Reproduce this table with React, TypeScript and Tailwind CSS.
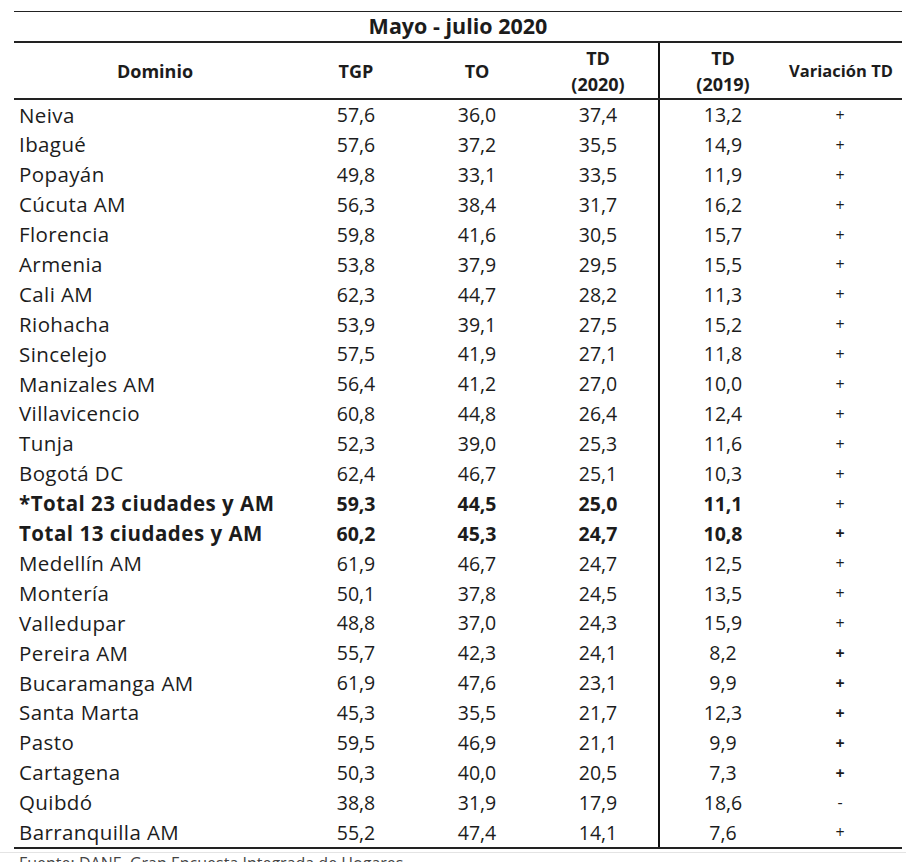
const rows: [string, string, string, string, string, string, boolean, boolean][] = [
  ["Neiva", "57,6", "36,0", "37,4", "13,2", "+", false, false],
  ["Ibagué", "57,6", "37,2", "35,5", "14,9", "+", false, false],
  ["Popayán", "49,8", "33,1", "33,5", "11,9", "+", false, false],
  ["Cúcuta AM", "56,3", "38,4", "31,7", "16,2", "+", false, false],
  ["Florencia", "59,8", "41,6", "30,5", "15,7", "+", false, false],
  ["Armenia", "53,8", "37,9", "29,5", "15,5", "+", false, false],
  ["Cali AM", "62,3", "44,7", "28,2", "11,3", "+", false, false],
  ["Riohacha", "53,9", "39,1", "27,5", "15,2", "+", false, false],
  ["Sincelejo", "57,5", "41,9", "27,1", "11,8", "+", false, false],
  ["Manizales AM", "56,4", "41,2", "27,0", "10,0", "+", false, false],
  ["Villavicencio", "60,8", "44,8", "26,4", "12,4", "+", false, false],
  ["Tunja", "52,3", "39,0", "25,3", "11,6", "+", false, false],
  ["Bogotá DC", "62,4", "46,7", "25,1", "10,3", "+", false, false],
  ["*Total 23 ciudades y AM", "59,3", "44,5", "25,0", "11,1", "+", true, false],
  ["Total 13 ciudades y AM", "60,2", "45,3", "24,7", "10,8", "+", true, true],
  ["Medellín AM", "61,9", "46,7", "24,7", "12,5", "+", false, false],
  ["Montería", "50,1", "37,8", "24,5", "13,5", "+", false, false],
  ["Valledupar", "48,8", "37,0", "24,3", "15,9", "+", false, false],
  ["Pereira AM", "55,7", "42,3", "24,1", "8,2", "+", false, true],
  ["Bucaramanga AM", "61,9", "47,6", "23,1", "9,9", "+", false, true],
  ["Santa Marta", "45,3", "35,5", "21,7", "12,3", "+", false, true],
  ["Pasto", "59,5", "46,9", "21,1", "9,9", "+", false, true],
  ["Cartagena", "50,3", "40,0", "20,5", "7,3", "+", false, true],
  ["Quibdó", "38,8", "31,9", "17,9", "18,6", "-", false, false],
  ["Barranquilla AM", "55,2", "47,4", "14,1", "7,6", "+", false, false],
];

export default function App() {
  return (
    <div className="w-[906px] h-[862px] overflow-hidden bg-white text-[#1c1c1c]" style={{ fontFamily: '"Open Sans", "DejaVu Sans", sans-serif' }}>
      <div className="ml-[14px] mt-[11px] w-[888px]">
        <div className="border-t-[1.5px] border-[#222]" />
        {/* title */}
        <div className="h-[29px] flex items-center justify-center font-bold text-[21.5px]">Mayo - julio 2020</div>
        <div className="border-t-[2.5px] border-[#222]" />
        {/* header */}
        <div className="flex h-[55px] font-bold text-[18px] leading-[26px]">
          <div className="w-[282px] flex items-center justify-center">Dominio</div>
          <div className="w-[120px] flex items-center justify-center">TGP</div>
          <div className="w-[122px] flex items-center justify-center">TO</div>
          <div className="w-[120px] flex flex-col items-center justify-center"><span>TD</span><span>(2020)</span></div>
          <div className="w-[128px] flex flex-col items-center justify-center border-l-2 border-[#111]"><span>TD</span><span>(2019)</span></div>
          <div className="w-[116px] flex items-center justify-center pr-[6px] text-[16.5px]">Variación TD</div>
        </div>
        <div className="border-t-2 border-[#222]" />
        {/* body */}
        <div className="text-[19.5px]">
          {rows.map((r, i) => (
            <div key={i} className={`flex h-[29.9px] items-center ${r[6] ? "font-bold" : ""}`}>
              <div className={`w-[282px] pl-[5px] whitespace-nowrap text-[20.5px] ${r[6] ? "tracking-[0.5px]" : "tracking-[0.4px]"}`}>{r[0]}</div>
              <div className="w-[120px] text-center">{r[1]}</div>
              <div className="w-[122px] text-center">{r[2]}</div>
              <div className="w-[120px] text-center">{r[3]}</div>
              <div className="w-[128px] h-full flex items-center justify-center border-l-2 border-[#111]">{r[4]}</div>
              <div className={`w-[116px] text-center pr-[8px] text-[16px] ${r[7] ? "font-bold" : "font-normal"}`}>{r[5]}</div>
            </div>
          ))}
        </div>
        <div className="border-t-2 border-[#222]" />
      </div>
      <div className="mt-[3px] border-t border-[#e4e4e4] pt-[2px] pl-[19px] text-[16px] leading-[16px] text-[#444] whitespace-nowrap">
        Fuente: DANE, Gran Encuesta Integrada de Hogares
      </div>
    </div>
  );
}
